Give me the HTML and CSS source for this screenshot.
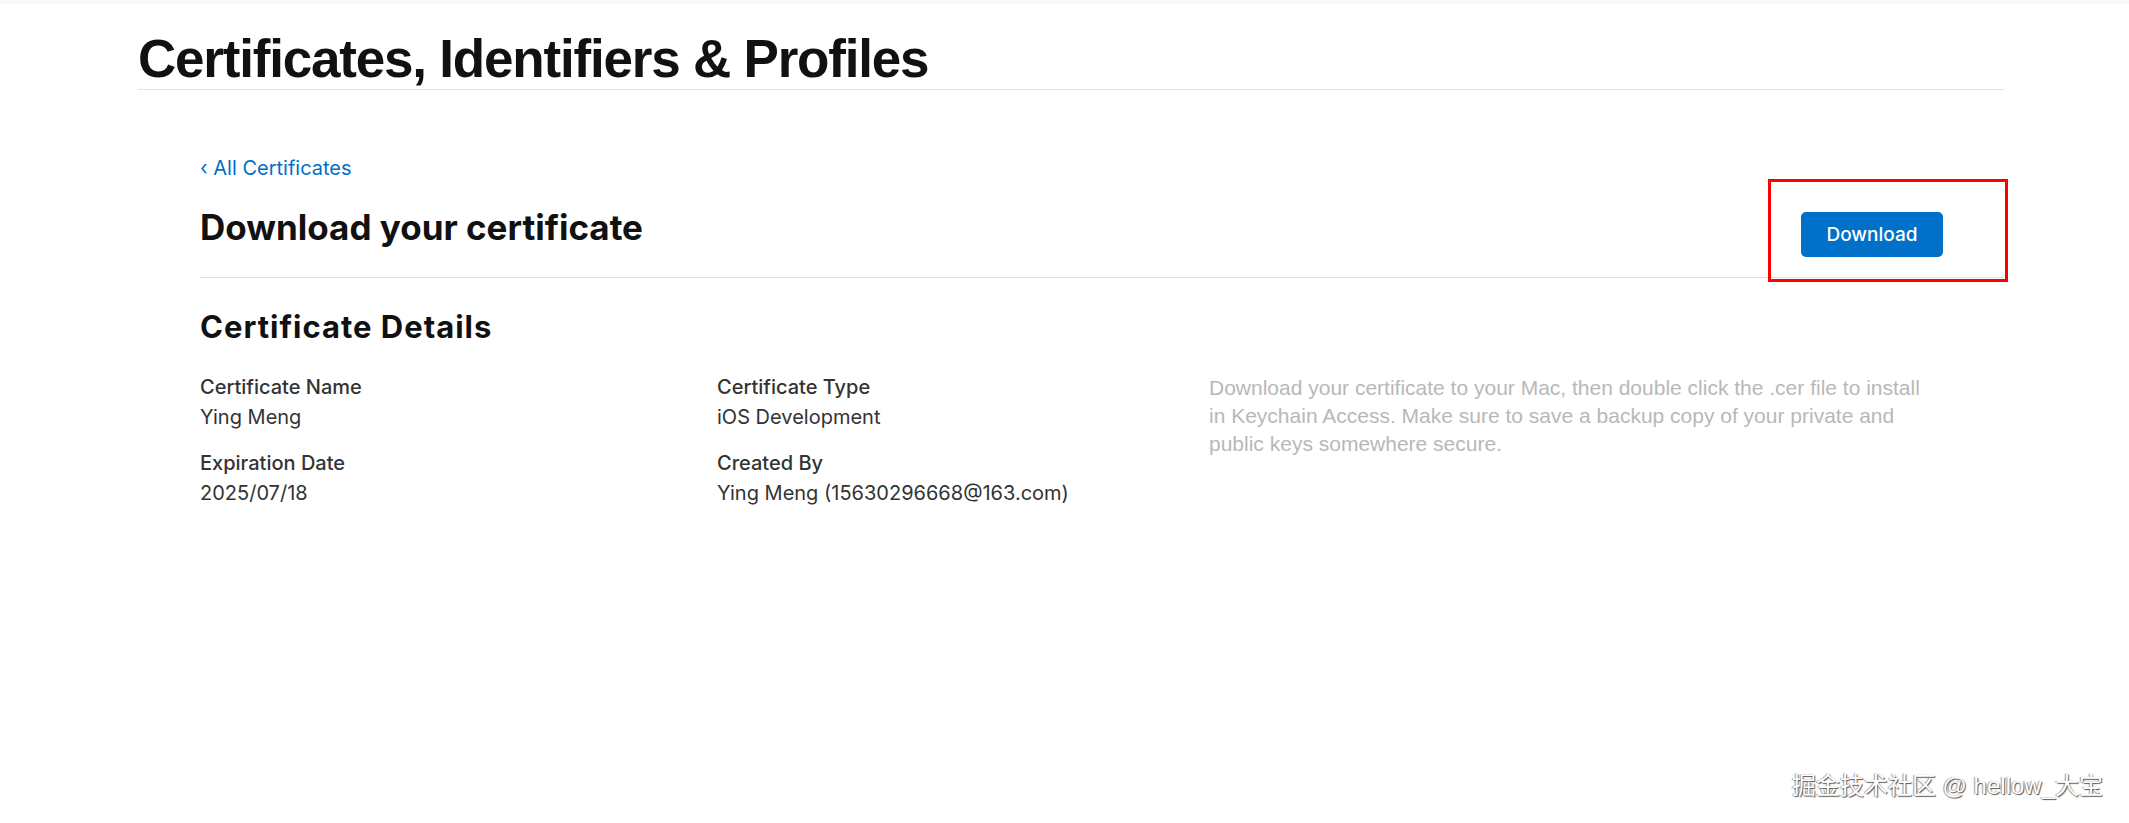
FILE: index.html
```html
<!DOCTYPE html>
<html lang="en">
<head>
    <meta charset="UTF-8">
    <meta name="viewport" content="width=device-width, initial-scale=1.0">
    <title>Certificates, Identifiers &amp; Profiles</title>
    <link rel="stylesheet" href="styles.css">
</head>
<body>
    <div class="topbar"></div>
    <div class="page">
        <div class="cabecera">
            <h1>Certificates, Identifiers &amp; Profiles</h1>
        </div>
        <div class="contenido">
            <a class="volver" href="#">&lsaquo; All Certificates</a>
            <div class="fila-titulo">
                <h2>Download your certificate</h2>
                <div class="marca">
                    <button type="button" class="descargar">Download</button>
                </div>
            </div>
            <h3>Certificate Details</h3>
            <div class="detalles">
                <div class="columna">
                    <div class="dato">
                        <span class="etiqueta">Certificate Name</span>
                        <span class="valor">Ying Meng</span>
                    </div>
                    <div class="dato">
                        <span class="etiqueta">Expiration Date</span>
                        <span class="valor">2025/07/18</span>
                    </div>
                </div>
                <div class="columna">
                    <div class="dato">
                        <span class="etiqueta">Certificate Type</span>
                        <span class="valor">iOS Development</span>
                    </div>
                    <div class="dato">
                        <span class="etiqueta">Created By</span>
                        <span class="valor">Ying Meng (15630296668@163.com)</span>
                    </div>
                </div>
                <p class="nota">Download your certificate to your Mac, then double click the .cer file to install in Keychain Access. Make sure to save a backup copy of your private and public keys somewhere secure.</p>
            </div>
        </div>
    </div>
    <div class="firma">掘金技术社区 @ hellow_大宝</div>
</body>
</html>
```

FILE: styles.css
```css
body {
    margin: 0;
    background-color: #fff;
    font-family: Inter, "Noto Sans", sans-serif;
    color: #333;
}

.topbar {
    height: 4px;
    background-color: #f9f9f9;
}

.page {
    width: 1866px;
    margin-left: 138px;
}

.cabecera {
    border-bottom: 1px solid #e3e3e3;
}
h1 {
    margin: 0;
    padding-top: 26px;
    height: 59px;
    font-family: "Liberation Sans", Arial, sans-serif;
    font-size: 53px;
    font-weight: bold;
    letter-spacing: -1.2px;
    line-height: 58px;
    color: #111;
}

.contenido {
    padding-left: 62px;
    padding-top: 66px;
}

.volver {
    display: block;
    font-size: 20px;
    line-height: 24px;
    color: #0070c9;
    text-decoration: none;
}

.fila-titulo {
    display: flex;
    justify-content: space-between;
    align-items: flex-start;
    height: 97px;
    border-bottom: 1px solid #e0e0e0;
}
h2 {
    margin: 0;
    margin-top: 26px;
    font-size: 35px;
    font-weight: 700;
    line-height: 42px;
    color: #111;
}

.marca {
    position: relative;
    margin-right: 61px;
    margin-top: 32px;
}
.marca::after {
    content: "";
    position: absolute;
    left: -33px;
    top: -33px;
    width: 234px;
    height: 97px;
    border: 3px solid #f00;
}
.descargar {
    display: block;
    width: 142px;
    height: 45px;
    border: none;
    border-radius: 5px;
    background-color: #0070c9;
    color: #fff;
    font-family: Inter, sans-serif;
    font-size: 19px;
    font-weight: 500;
}

h3 {
    margin: 0;
    margin-top: 29px;
    font-size: 31px;
    font-weight: 700;
    line-height: 40px;
    letter-spacing: 1px;
    color: #111;
}

.detalles {
    display: grid;
    grid-template-columns: 517px 492px 728px;
    margin-top: 25px;
}
.dato {
    display: flex;
    flex-direction: column;
    margin-bottom: 16px;
}
.etiqueta {
    font-size: 20px;
    font-weight: 500;
    line-height: 30px;
}
.valor {
    font-size: 20px;
    line-height: 30px;
}

.nota {
    margin: 0;
    margin-top: 2px;
    font-family: "Liberation Sans", Arial, sans-serif;
    font-size: 21px;
    line-height: 28px;
    color: #b8b8b8;
}

.firma {
    position: absolute;
    right: 26px;
    bottom: 22px;
    font-family: "Liberation Sans", "Noto Sans CJK SC", sans-serif;
    font-size: 24px;
    color: #fff;
    text-shadow: 1px 1px 1px #555, -1px 0 1px #999;
}
```
